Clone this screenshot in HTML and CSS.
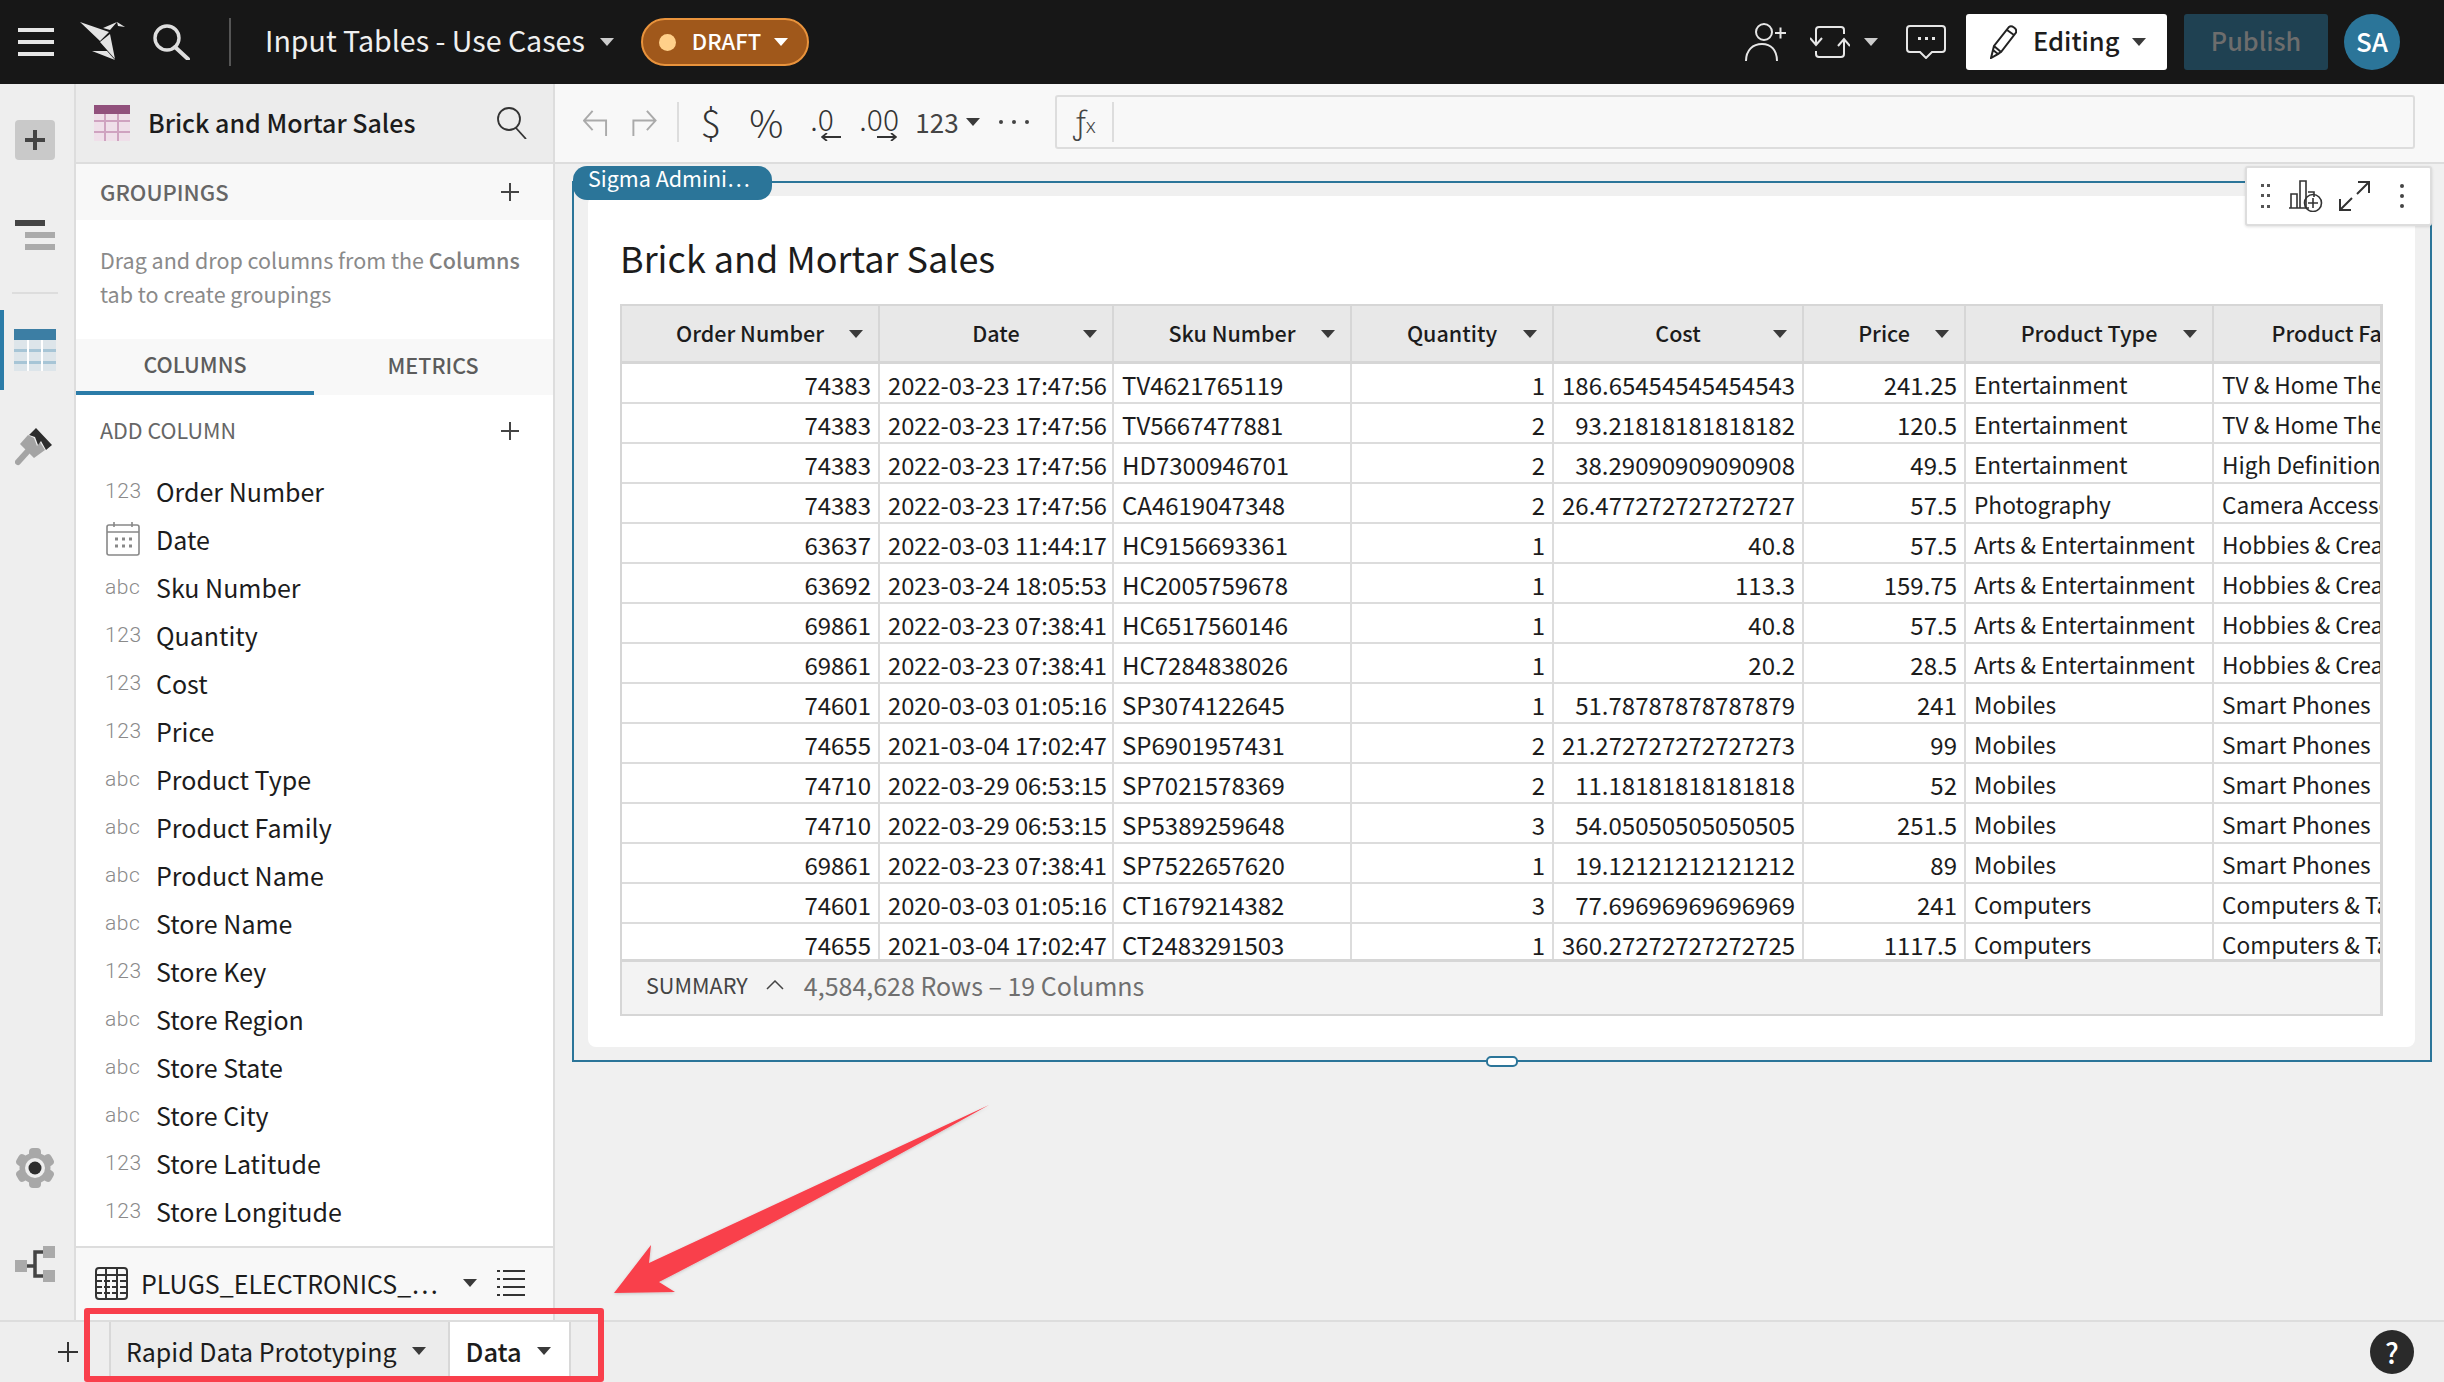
FILE: index.html
```html
<!DOCTYPE html>
<html lang="en">
<head>
<meta charset="utf-8">
<title>Input Tables - Use Cases</title>
<link rel="stylesheet" href="styles.css">
</head>
<body>
<div class="app">
  <header class="topbar">
    <div class="top-left">
      <svg class="ic-ham" viewBox="0 0 36 28"><path d="M0 0h36v4H0zM0 12h36v4H0zM0 24h36v4H0z" fill="#e6e6e6"/></svg>
      <svg class="ic-logo" viewBox="0 0 45 40"><path d="M0 0 29 10 20 19zM23 6 37 0 30 8zM37 0 45 5 38 4zM20 20 30 12 35 37zM12 29 27 29 35 38z" fill="#e4e4e4"/></svg>
      <svg class="ic-search" viewBox="0 0 37 36"><circle cx="14" cy="14" r="12" fill="none" stroke="#dedede" stroke-width="3.4"/><path d="M22 23 35 35" stroke="#dedede" stroke-width="4" stroke-linecap="round"/></svg>
      <span class="top-div"></span>
      <span class="doc-title">Input Tables - Use Cases</span>
      <span class="caret caret-light doc-caret"></span>
      <span class="draft"><i class="draft-dot"></i><b>DRAFT</b><span class="caret caret-white"></span></span>
    </div>
    <div class="top-right">
      <svg class="ic-person" viewBox="0 0 42 38" fill="none" stroke="#e6e6e6" stroke-width="2"><circle cx="19" cy="9" r="8"/><path d="M1 38C1 27 8 21 17 21s15 6 15 17"/><path d="M30 10h11M35.500 4.500v11"/></svg>
      <svg class="ic-sync" viewBox="0 0 40 32" fill="none" stroke="#e6e6e6" stroke-width="2"><path d="M6 19V4q0-3 3-3h22q3 0 3 3v4M0 12l6 7 6-7M34 13v15q0 3-3 3H9q-3 0-3-3v-3M28 20l6-7 6 7"/></svg>
      <span class="caret caret-light sync-caret"></span>
      <svg class="ic-comment" viewBox="0 0 40 34" fill="none" stroke="#e6e6e6" stroke-width="2"><path d="M4 1h32q3 0 3 3v20q0 3-3 3H26l-6 6-6-6H4q-3 0-3-3V4q0-3 3-3z"/><path d="M12 13.500h3M19 13.500h3M26 13.500h3" stroke-width="3"/></svg>
      <button class="editing">
        <svg class="ic-pencil" viewBox="0 0 27 34" fill="none" stroke="#222" stroke-width="2"><path d="M1 33 4 21 19 2q2-1.500 5 .5t2 5L11 27zM4 21l7 6M1 33l2-8 5 4zM17 5l7 5"/></svg>
        <span>Editing</span><span class="caret caret-dark"></span>
      </button>
      <button class="publish">Publish</button>
      <span class="avatar">SA</span>
    </div>
  </header>

  <div class="body">
    <nav class="rail">
      <span class="rail-add"><svg viewBox="0 0 20 20"><path d="M8 0h4v8h8v4h-8v8H8v-8H0V8h8z" fill="#444"/></svg></span>
      <svg class="rail-lines" viewBox="0 0 40 30"><path d="M0 0h30v6H0z" fill="#444"/><path d="M10 12h30v6H10zM10 24h30v6H10z" fill="#aaa"/></svg>
      <span class="rail-div"></span>
      <span class="rail-active">
        <svg viewBox="0 0 42 42"><rect width="42" height="42" fill="#dde5ea"/><rect width="42" height="11" fill="#3c7ea4"/><path d="M0 20h42v3H0zM0 32h42v3H0z" fill="#a7c5d6"/><path d="M13 11h2v31h-2zM27 11h2v31h-2z" fill="#fff"/></svg>
      </span>
      <svg class="rail-paint" viewBox="0 0 40 40"><path d="M13 8 5 17 19 31 30 23 25 15 22 19 19 11z" fill="#a4a4a4"/><path d="M12 25 3 35" stroke="#a4a4a4" stroke-width="6" stroke-linecap="round"/><path d="M21 1 37 18 31 23 26 14 23 18 20 10 14 8z" fill="#2c2c2c"/></svg>
      <svg class="rail-gear" viewBox="0 0 40 40"><g fill="#a8a8a8"><circle cx="20" cy="20" r="15.500"/><rect x="14" y="0" width="12" height="40" rx="4"/><rect x="14" y="0" width="12" height="40" rx="4" transform="rotate(60 20 20)"/><rect x="14" y="0" width="12" height="40" rx="4" transform="rotate(120 20 20)"/></g><circle cx="20" cy="20" r="10" fill="#eee"/><circle cx="20" cy="20" r="6.500" fill="#2e2e2e"/></svg>
      <svg class="rail-lineage" viewBox="0 0 40 36"><path d="M12 20h8M28 6h-8v24h8" fill="none" stroke="#444" stroke-width="3.500"/><path d="M0 14h12v12H0zM28 0h12v12H28zM28 24h12v12H28z" fill="#aaa"/></svg>
    </nav>

    <aside class="panel">
      <div class="panel-head">
        <svg class="ic-ptable" viewBox="0 0 36 36"><rect width="36" height="36" fill="#efdfe9"/><rect width="36" height="9" fill="#91507c"/><path d="M0 15h36v2H0zM0 26h36v2H0z" fill="#cfa3c0"/><path d="M10 9h2v27h-2zM23 9h2v27h-2z" fill="#cfa3c0"/></svg>
        <span class="panel-title">Brick and Mortar Sales</span>
        <svg class="ic-psearch" viewBox="0 0 30 32" fill="none" stroke="#333" stroke-width="1.800"><circle cx="12" cy="12" r="11"/><path d="M19 21 29 32"/></svg>
      </div>
      <div class="section-bar shaded"><span>GROUPINGS</span><svg class="ic-plus" viewBox="0 0 18 18"><path d="M9 0v18M0 9h18" stroke="#444" stroke-width="2"/></svg></div>
      <p class="hint">Drag and drop columns from the <b>Columns</b> tab to create groupings</p>
      <div class="tabs"><span class="tab on">COLUMNS</span><span class="tab">METRICS</span></div>
      <div class="section-bar"><span class="thin">ADD COLUMN</span><svg class="ic-plus" viewBox="0 0 18 18"><path d="M9 0v18M0 9h18" stroke="#444" stroke-width="2"/></svg></div>
      <ul class="cols">
        <li><i class="ty">123</i>Order Number</li>
        <li><i class="ty"><svg class="ic-cal" viewBox="0 0 34 34" fill="none" stroke="#888" stroke-width="1.600"><rect x="1" y="3" width="32" height="30" rx="2"/><path d="M1 10h32M8 0v5M26 0v5"/><path d="M9 17h3M16 17h3M23 17h3M9 24h3M16 24h3M23 24h3" stroke-width="3"/></svg></i>Date</li>
        <li><i class="ty">abc</i>Sku Number</li>
        <li><i class="ty">123</i>Quantity</li>
        <li><i class="ty">123</i>Cost</li>
        <li><i class="ty">123</i>Price</li>
        <li><i class="ty">abc</i>Product Type</li>
        <li><i class="ty">abc</i>Product Family</li>
        <li><i class="ty">abc</i>Product Name</li>
        <li><i class="ty">abc</i>Store Name</li>
        <li><i class="ty">123</i>Store Key</li>
        <li><i class="ty">abc</i>Store Region</li>
        <li><i class="ty">abc</i>Store State</li>
        <li><i class="ty">abc</i>Store City</li>
        <li><i class="ty">123</i>Store Latitude</li>
        <li><i class="ty">123</i>Store Longitude</li>
      </ul>
      <div class="source">
        <svg class="ic-grid" viewBox="0 0 33 33" fill="none" stroke="#333" stroke-width="2"><rect x="1" y="1" width="31" height="31" rx="3"/><path d="M1 8h31M11 1v31M22 1v31"/><path d="M1 14h31M1 20h31M1 26h31" stroke-dasharray="6 2"/></svg>
        <span class="source-name">PLUGS_ELECTRONICS_…</span>
        <span class="caret caret-dark"></span>
        <svg class="ic-list" viewBox="0 0 28 26" fill="none" stroke="#333" stroke-width="2"><path d="M6 1h22M6 9h22M6 17h22M6 25h22M0 1h3M0 9h3M0 17h3M0 25h3"/></svg>
      </div>
    </aside>

    <main class="main">
      <div class="toolbar">
        <svg class="t-undo" viewBox="0 0 26 28" fill="none" stroke="#aaa" stroke-width="2"><path d="M24 28V12H2M10 2 1 12l9 10"/></svg>
        <svg class="t-redo" viewBox="0 0 26 28" fill="none" stroke="#aaa" stroke-width="2"><path d="M2 28V12h22M16 2l9 10-9 10"/></svg>
        <span class="t-div"></span>
        <span class="t-dollar">$</span>
        <span class="t-pct">%</span>
        <span class="t-dec">.0<svg viewBox="0 0 20 8"><path d="M20 4H2M6 0 1 4l5 4" fill="none" stroke="#333" stroke-width="1.800"/></svg></span>
        <span class="t-dec2">.00<svg viewBox="0 0 20 8"><path d="M0 4h18M14 0l5 4-5 4" fill="none" stroke="#333" stroke-width="1.800"/></svg></span>
        <span class="t-num">123</span><span class="caret caret-dark t-caret"></span>
        <svg class="t-more" viewBox="0 0 30 4"><circle cx="2" cy="2" r="2" fill="#444"/><circle cx="15" cy="2" r="2" fill="#444"/><circle cx="28" cy="2" r="2" fill="#444"/></svg>
        <div class="formula"><span class="fx"><i>ƒ</i><small>x</small></span><span class="fx-input"></span></div>
      </div>
      <div class="canvas">
        <section class="element">
          <span class="tag">Sigma Admini…</span>
          <div class="float">
            <svg class="f-drag" viewBox="0 0 9 24"><path d="M0 0h3v3H0zM6 0h3v3H6zM0 10h3v3H0zM6 10h3v3H6zM0 21h3v3H0zM6 21h3v3H6z" fill="#555"/></svg>
            <svg class="f-chart" viewBox="0 0 34 32" fill="none" stroke="#333" stroke-width="1.600"><path d="M0 28h20M2 28V14h6v14M11 28V1h6v27M19 12h6v5"/><circle cx="24" cy="23" r="8.500"/><path d="M24 18v10M19 23h10"/></svg>
            <svg class="f-exp" viewBox="0 0 31 30" fill="none" stroke="#333" stroke-width="2"><path d="M19 1h11v11M30 1 18 13M1 18v11h11M1 29l12-12"/></svg>
            <svg class="f-kebab" viewBox="0 0 4 24"><circle cx="2" cy="2" r="2" fill="#444"/><circle cx="2" cy="12" r="2" fill="#444"/><circle cx="2" cy="22" r="2" fill="#444"/></svg>
          </div>
          <div class="card">
            <h1 class="card-title">Brick and Mortar Sales</h1>
            <div class="grid">
              <div class="grid-scroll">
                <table>
                  <colgroup><col class="c1"><col class="c2"><col class="c3"><col class="c4"><col class="c5"><col class="c6"><col class="c7"><col class="c8"></colgroup>
                  <thead>
                    <tr>
                      <th><span class="th"><span></span><b>Order Number</b><span class="caret caret-dark"></span></span></th>
                      <th><span class="th"><span></span><b>Date</b><span class="caret caret-dark"></span></span></th>
                      <th><span class="th"><span></span><b>Sku Number</b><span class="caret caret-dark"></span></span></th>
                      <th><span class="th"><span></span><b>Quantity</b><span class="caret caret-dark"></span></span></th>
                      <th><span class="th"><span></span><b>Cost</b><span class="caret caret-dark"></span></span></th>
                      <th><span class="th"><span></span><b>Price</b><span class="caret caret-dark"></span></span></th>
                      <th><span class="th"><span></span><b>Product Type</b><span class="caret caret-dark"></span></span></th>
                      <th class="last"><span class="th"><span></span><b>Product Family</b><span class="caret caret-dark"></span></span></th>
                    </tr>
                  </thead>
                  <tbody>
                    <tr><td class="r">74383</td><td>2022-03-23 17:47:56</td><td>TV4621765119</td><td class="r">1</td><td class="r">186.65454545454543</td><td class="r">241.25</td><td>Entertainment</td><td>TV &amp; Home Theater</td></tr>
                    <tr><td class="r">74383</td><td>2022-03-23 17:47:56</td><td>TV5667477881</td><td class="r">2</td><td class="r">93.21818181818182</td><td class="r">120.5</td><td>Entertainment</td><td>TV &amp; Home Theater</td></tr>
                    <tr><td class="r">74383</td><td>2022-03-23 17:47:56</td><td>HD7300946701</td><td class="r">2</td><td class="r">38.29090909090908</td><td class="r">49.5</td><td>Entertainment</td><td>High Definition TV</td></tr>
                    <tr><td class="r">74383</td><td>2022-03-23 17:47:56</td><td>CA4619047348</td><td class="r">2</td><td class="r">26.477272727272727</td><td class="r">57.5</td><td>Photography</td><td>Camera Accessories</td></tr>
                    <tr><td class="r">63637</td><td>2022-03-03 11:44:17</td><td>HC9156693361</td><td class="r">1</td><td class="r">40.8</td><td class="r">57.5</td><td>Arts &amp; Entertainment</td><td>Hobbies &amp; Creative Arts</td></tr>
                    <tr><td class="r">63692</td><td>2023-03-24 18:05:53</td><td>HC2005759678</td><td class="r">1</td><td class="r">113.3</td><td class="r">159.75</td><td>Arts &amp; Entertainment</td><td>Hobbies &amp; Creative Arts</td></tr>
                    <tr><td class="r">69861</td><td>2022-03-23 07:38:41</td><td>HC6517560146</td><td class="r">1</td><td class="r">40.8</td><td class="r">57.5</td><td>Arts &amp; Entertainment</td><td>Hobbies &amp; Creative Arts</td></tr>
                    <tr><td class="r">69861</td><td>2022-03-23 07:38:41</td><td>HC7284838026</td><td class="r">1</td><td class="r">20.2</td><td class="r">28.5</td><td>Arts &amp; Entertainment</td><td>Hobbies &amp; Creative Arts</td></tr>
                    <tr><td class="r">74601</td><td>2020-03-03 01:05:16</td><td>SP3074122645</td><td class="r">1</td><td class="r">51.78787878787879</td><td class="r">241</td><td>Mobiles</td><td>Smart Phones</td></tr>
                    <tr><td class="r">74655</td><td>2021-03-04 17:02:47</td><td>SP6901957431</td><td class="r">2</td><td class="r">21.272727272727273</td><td class="r">99</td><td>Mobiles</td><td>Smart Phones</td></tr>
                    <tr><td class="r">74710</td><td>2022-03-29 06:53:15</td><td>SP7021578369</td><td class="r">2</td><td class="r">11.18181818181818</td><td class="r">52</td><td>Mobiles</td><td>Smart Phones</td></tr>
                    <tr><td class="r">74710</td><td>2022-03-29 06:53:15</td><td>SP5389259648</td><td class="r">3</td><td class="r">54.05050505050505</td><td class="r">251.5</td><td>Mobiles</td><td>Smart Phones</td></tr>
                    <tr><td class="r">69861</td><td>2022-03-23 07:38:41</td><td>SP7522657620</td><td class="r">1</td><td class="r">19.12121212121212</td><td class="r">89</td><td>Mobiles</td><td>Smart Phones</td></tr>
                    <tr><td class="r">74601</td><td>2020-03-03 01:05:16</td><td>CT1679214382</td><td class="r">3</td><td class="r">77.69696969696969</td><td class="r">241</td><td>Computers</td><td>Computers &amp; Tablets</td></tr>
                    <tr><td class="r">74655</td><td>2021-03-04 17:02:47</td><td>CT2483291503</td><td class="r">1</td><td class="r">360.27272727272725</td><td class="r">1117.5</td><td>Computers</td><td>Computers &amp; Tablets</td></tr>
                  </tbody>
                </table>
              </div>
              <div class="summary"><span class="sum-label">SUMMARY</span><svg class="ic-up" viewBox="0 0 18 10" fill="none" stroke="#444" stroke-width="1.500"><path d="M1 9 9 1l8 8"/></svg><span class="sum-text">4,584,628 Rows – 19 Columns</span></div>
            </div>
          </div>
          <span class="handle"></span>
        </section>
      </div>
    </main>
  </div>

  <footer class="tabbar">
    <svg class="ic-addtab" viewBox="0 0 20 20"><path d="M10 0v20M0 10h20" stroke="#333" stroke-width="2"/></svg>
    <div class="sheet"><span>Rapid Data Prototyping</span><span class="caret caret-dark"></span></div>
    <div class="sheet active"><b>Data</b><span class="caret caret-dark"></span></div>
    <span class="help">?</span>
  </footer>

  <div class="callout-box"></div>
  <svg class="callout-arrow" viewBox="0 0 400 210"><defs><filter id="s" x="-10%" y="-10%" width="120%" height="120%"><feDropShadow dx="0" dy="1" stdDeviation="1.500" flood-color="#000" flood-opacity=".18"/></filter></defs><path d="M385 0 45 158 47 140 10 188 71 187 55 177Q205 100 385 0z" fill="#f93f4c" filter="url(#s)"/></svg>
</div>
</body>
</html>
```
FILE: styles.css
```css
* { box-sizing: border-box; }
html, body { margin: 0; padding: 0; }
body {
  width: 2444px;
  height: 1382px;
  overflow: hidden;
  font-family: "Noto Sans CJK JP", "Source Sans Pro", "Noto Sans", sans-serif;
  color: #1c1c1c;
  background: #f0f0f0;
}
svg { display: block; flex: none; }
i { font-style: normal; }
.app { position: relative; width: 2444px; height: 1382px; display: flex; flex-direction: column; }

.caret { display: block; flex: none; width: 0; height: 0; border-left: 7px solid transparent; border-right: 7px solid transparent; border-top: 8px solid #444; }
.caret-light { border-top-color: #ccc; }
.caret-white { border-top-color: #fff; }
.caret-dark { border-top-color: #3a3a3a; }

/* top bar */
.topbar { height: 84px; flex: none; background: #171717; display: flex; justify-content: space-between; align-items: center; padding: 0 44px 0 18px; }
.top-left, .top-right { display: flex; align-items: center; }
.ic-ham { width: 36px; height: 28px; margin-right: 26px; }
.ic-logo { width: 45px; height: 40px; margin-right: 28px; }
.ic-search { width: 37px; height: 36px; margin-right: 39px; }
.top-div { width: 2px; height: 48px; background: #555; margin-right: 34px; }
.doc-title { color: #efefef; font-size: 28.6px; line-height: 40px; padding-bottom: 5px; }
.doc-caret { margin: 0 27px 0 15px; }
.draft { width: 168px; height: 48px; border-radius: 24px; border: 2px solid #e9933c; background: #a0581b; display: flex; align-items: center; padding-left: 16px; color: #fff; }
.draft-dot { width: 17px; height: 17px; border-radius: 50%; background: #ffd08a; margin-right: 16px; }
.draft b { font-size: 22px; line-height: 30px; font-weight: 500; margin-right: 13px; padding-bottom: 4px; }
.ic-person { width: 42px; height: 38px; margin-right: 23px; }
.ic-sync { width: 40px; height: 32px; margin-right: 14px; }
.sync-caret { margin-right: 28px; }
.ic-comment { width: 40px; height: 34px; margin-right: 20px; }
.editing { width: 201px; height: 56px; background: #fff; border: 0; border-radius: 3px; display: flex; align-items: center; padding: 0 0 0 24px; font: inherit; color: #1c1c1c; margin-right: 17px; }
.ic-pencil { width: 27px; height: 34px; margin-right: 16px; }
.editing span:nth-of-type(1) { font-size: 25.5px; line-height: 36px; font-weight: 500; margin-right: 12px; padding-bottom: 4px; }
.publish { width: 144px; height: 56px; background: #1f4152; border: 0; border-radius: 3px; color: #6d6d6d; font: inherit; font-size: 25.2px; font-weight: 500; margin-right: 16px; padding: 0 0 5px; }
.avatar { width: 56px; height: 56px; border-radius: 50%; background: #2b7599; color: #fff; font-size: 26px; font-weight: 500; display: flex; align-items: center; justify-content: center; padding-bottom: 3px; }

/* layout */
.body { flex: 1; display: flex; min-height: 0; }

/* rail */
.rail { width: 74px; flex: none; background: #eee; display: flex; flex-direction: column; align-items: center; padding: 36px 4px 38px 0; }
.rail-add { width: 40px; height: 40px; background: #c9c9c9; border-radius: 4px; display: flex; align-items: center; justify-content: center; }
.rail-add svg { width: 20px; height: 20px; }
.rail-lines { width: 40px; height: 30px; margin-top: 60px; }
.rail-div { width: 46px; height: 2px; background: #ddd; margin-top: 42px; }
.rail-active { align-self: stretch; height: 80px; margin-top: 16px; border-left: 4px solid #2b7ca8; display: flex; align-items: center; padding-left: 10px; }
.rail-active svg { width: 42px; height: 42px; }
.rail-paint { width: 40px; height: 40px; margin-top: 37px; }
.rail-gear { width: 40px; height: 40px; margin-top: auto; }
.rail-lineage { width: 40px; height: 36px; margin-top: 58px; }

/* panel */
.panel { width: 481px; flex: none; background: #fff; border-left: 2px solid #ddd; border-right: 2px solid #ddd; display: flex; flex-direction: column; }
.panel-head { height: 80px; flex: none; background: #ececec; border-bottom: 2px solid #ddd; display: flex; align-items: center; padding: 0 26px 0 18px; }
.ic-ptable { width: 36px; height: 36px; margin-right: 18px; }
.panel-title { font-size: 25px; line-height: 36px; font-weight: 500; flex: 1; padding-bottom: 3px; }
.ic-psearch { width: 30px; height: 32px; }
.section-bar { height: 56px; flex: none; display: flex; align-items: center; justify-content: space-between; padding: 0 34px 0 24px; color: #666; font-size: 22px; line-height: 30px; font-weight: 500; }
.section-bar span { padding-bottom: 3px; }
.section-bar.shaded { background: #f8f8f8; }
.section-bar .thin { font-weight: 400; font-size: 21.5px; }
.ic-plus { width: 18px; height: 18px; }
.hint { margin: 0; height: 119px; flex: none; padding: 23px 18px 0 24px; font-size: 21.5px; line-height: 34px; color: #8a8a8a; }
.hint b { font-weight: 500; color: #808080; }
.tabs { height: 56px; flex: none; background: #f8f8f8; display: flex; margin-bottom: 8px; }
.tab { width: 238px; display: flex; align-items: center; justify-content: center; font-size: 21.5px; line-height: 30px; font-weight: 500; color: #5c5c5c; border-bottom: 4px solid transparent; }
.tab.on { border-bottom-color: #2b7ca8; padding-bottom: 2px; }
.cols { list-style: none; margin: 9px 0 0; padding: 0; flex: 1; }
.cols li { height: 48px; display: flex; align-items: center; padding-left: 24px; font-size: 25px; line-height: 36px; padding-bottom: 3px; }
.ty { width: 56px; flex: none; font-family: Roboto, sans-serif; font-size: 21px; letter-spacing: .6px; color: #8a8a8a; padding-left: 5px; font-weight: 300; }
.ic-cal { width: 34px; height: 34px; margin-left: 1px; }
.source { height: 74px; flex: none; background: #f8f8f8; border-top: 2px solid #ddd; display: flex; align-items: center; padding: 0 28px 2px 19px; }
.ic-grid { width: 33px; height: 33px; margin-right: 13px; }
.source-name { font-size: 25px; line-height: 36px; width: 322px; flex: none; white-space: nowrap; }
.ic-list { width: 28px; height: 26px; margin-left: 20px; }

/* main */
.main { flex: 1; min-width: 0; display: flex; flex-direction: column; }
.toolbar { height: 80px; flex: none; background: #f8f8f8; border-bottom: 2px solid #ddd; display: flex; align-items: center; padding: 0 29px 2px 28px; color: #333; }
.t-undo { width: 25px; height: 27px; margin-right: 23px; }
.t-redo { width: 26px; height: 27px; margin-right: 20px; }
.t-div { width: 2px; height: 40px; background: #ddd; margin-right: 21px; }
.t-dollar { font-size: 38px; line-height: 40px; font-weight: 300; width: 22px; margin-right: 28px; text-align: center; }
.t-pct { font-size: 38px; line-height: 40px; font-weight: 300; width: 34px; margin-right: 27px; text-align: center; }
.t-dec, .t-dec2 { display: flex; flex-direction: column; font-size: 30px; line-height: 30px; font-weight: 300; width: 32px; margin-right: 18px; }
.t-dec2 { width: 38px; }
.t-dec svg, .t-dec2 svg { width: 20px; height: 8px; margin-left: auto; }
.t-num { font-size: 26px; line-height: 34px; width: 46px; margin-right: 6px; color: #444; }
.t-caret { margin-right: 19px; }
.t-more { width: 30px; height: 4px; margin-right: 26px; }
.formula { width: 1360px; height: 54px; flex: none; border: 2px solid #ddd; border-radius: 3px; background: #f8f8f8; display: flex; align-items: center; }
.fx { width: 57px; height: 40px; display: flex; justify-content: center; align-items: center; color: #444; border-right: 2px solid #ddd; font-family: "Noto Sans", sans-serif; font-weight: 300; }
.fx i { font-size: 32px; line-height: 40px; }
.fx small { font-size: 20px; line-height: 40px; padding-top: 8px; }

.canvas { flex: 1; min-height: 0; padding: 17px 12px 0 17px; background: #f0f0f0; }
.element { position: relative; height: 881px; border: 2px solid #2b7599; padding: 13px 15px 13px 14px; display: flex; }
.tag { position: absolute; left: -1px; top: -17px; width: 199px; height: 34px; background: #2b7599; color: #fff; border-radius: 14px; font-size: 21.5px; line-height: 24px; padding-left: 15px; white-space: nowrap; }
.float { position: absolute; right: -2px; top: -17px; width: 187px; height: 60px; background: #fff; border: 2px solid #ddd; border-radius: 3px; box-shadow: 0 1px 3px rgba(0,0,0,.12); display: flex; align-items: center; padding-left: 14px; z-index: 2; }
.f-drag { width: 9px; height: 24px; margin-right: 19px; }
.f-chart { width: 34px; height: 32px; margin-right: 16px; }
.f-exp { width: 31px; height: 30px; margin-right: 30px; }
.f-kebab { width: 4px; height: 24px; }
.handle { position: absolute; left: 912px; bottom: -7px; width: 32px; height: 11px; background: #fff; border: 2px solid #2b7599; border-radius: 5px; }

.card { flex: 1; min-width: 0; background: #fff; border-radius: 8px; padding: 0 32px 31px; display: flex; flex-direction: column; }
.card-title { margin: 0; height: 108px; flex: none; font-size: 36px; line-height: 50px; font-weight: 400; padding-top: 36px; color: #1c1c1c; }
.grid { flex: 1; min-height: 0; border: 2px solid #d6d6d6; border-right-width: 3px; display: flex; flex-direction: column; }
.grid-scroll { flex: 1; min-height: 0; overflow: hidden; }
table { border-collapse: separate; border-spacing: 0; table-layout: fixed; width: 1862px; font-size: 24px; }
.c1 { width: 258px; } .c2 { width: 234px; } .c3 { width: 238px; } .c4 { width: 202px; } .c5 { width: 250px; } .c6 { width: 162px; } .c7 { width: 248px; } .c8 { width: 270px; }
th { height: 58px; padding: 0; background: #e8e8e8; border-right: 2px solid #d6d6d6; border-bottom: 3px solid #d6d6d6; }
th.last { border-right: 0; }
.th { display: grid; grid-template-columns: 1fr auto 1fr; align-items: center; white-space: nowrap; line-height: 30px; padding-bottom: 1px; }
.th b { font-weight: 500; font-size: 21.5px; }
.th .caret { justify-self: end; margin-right: 15px; margin-top: 1px; }
td { height: 40px; padding: 3px 7px 0 8px; border-right: 2px solid #dcdcdc; border-bottom: 2px solid #dcdcdc; line-height: 30px; white-space: nowrap; overflow: hidden; }
td:last-child { border-right: 0; }
td:nth-child(2) { font-size: 23.7px; }
td:nth-child(7), td:nth-child(8) { font-size: 22.7px; }
td.r { text-align: right; }
.summary { height: 55px; flex: none; background: #f3f3f3; border-top: 3px solid #d6d6d6; display: flex; align-items: center; padding: 0 0 6px 24px; font-size: 22px; line-height: 30px; }
.sum-label { color: #444; font-size: 21.6px; margin-right: 18px; }
.ic-up { width: 18px; height: 10px; margin-right: 20px; }
.sum-text { color: #6f6f6f; font-size: 25px; }

/* tabs at the bottom */
.tabbar { height: 62px; flex: none; background: #eee; border-top: 2px solid #ddd; display: flex; align-items: stretch; padding: 0 30px 0 58px; }
.ic-addtab { width: 20px; height: 20px; align-self: center; margin-right: 31px; }
.sheet { display: flex; align-items: center; font-size: 25px; line-height: 36px; background: #ececec; border-left: 2px solid #d8d8d8; padding: 0 22px 2px 15px; }
.sheet span:first-child { margin-right: 15px; }
.sheet.active { background: #fff; border-right: 2px solid #d8d8d8; padding: 0 18px 2px 16px; font-size: 25.5px; }
.sheet.active b { font-weight: 500; margin-right: 15px; }
.help { margin-left: auto; align-self: center; width: 44px; height: 44px; border-radius: 50%; background: #2a2a2a; color: #fff; font-size: 28px; font-weight: 500; display: flex; align-items: center; justify-content: center; }

/* annotations */
.callout-box { position: absolute; left: 84px; top: 1308px; width: 520px; height: 74px; border: 6px solid #f93f4c; border-radius: 3px; }
.callout-arrow { position: absolute; left: 604px; top: 1105px; width: 400px; height: 210px; }
```
